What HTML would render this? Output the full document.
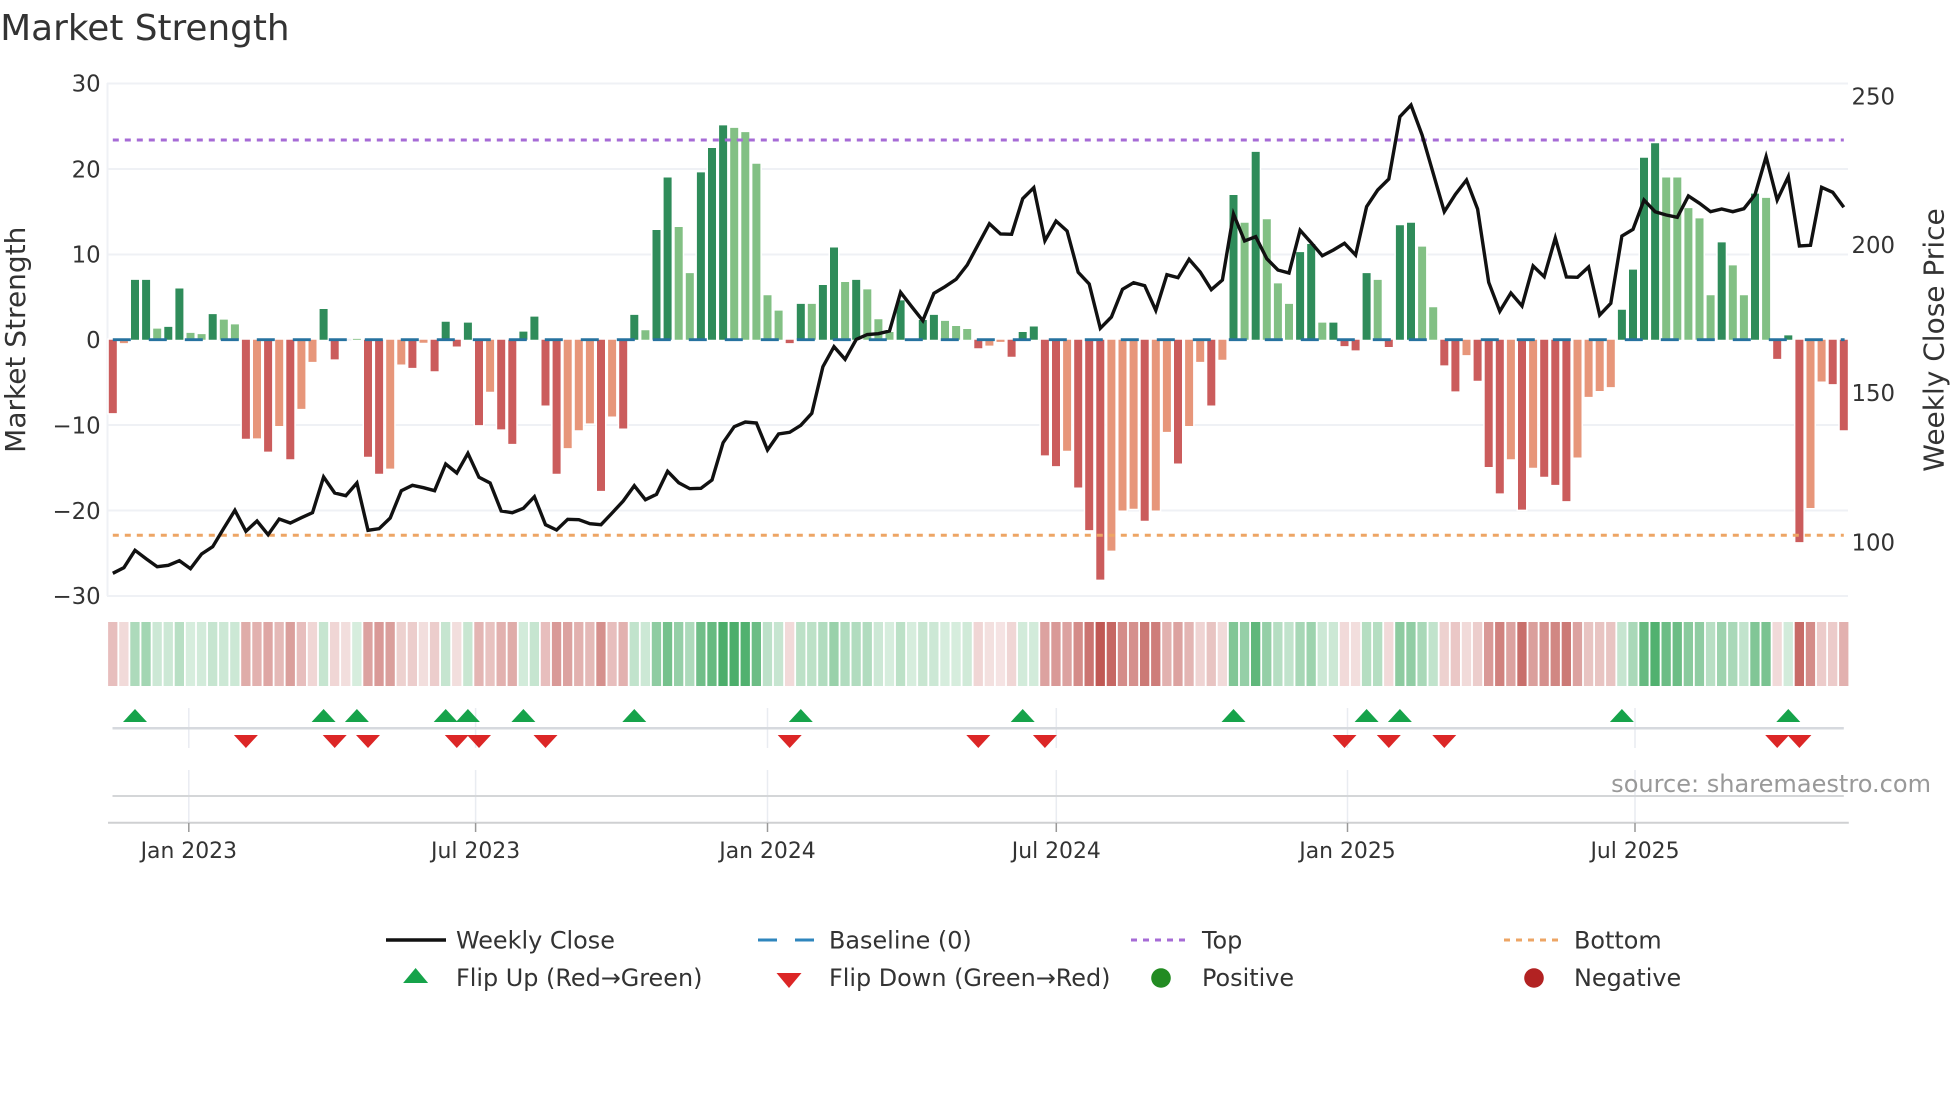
<!DOCTYPE html>
<html><head><meta charset="utf-8"><title>Market Strength</title>
<style>
html,body{margin:0;padding:0;background:#fff;width:1960px;height:1102px;overflow:hidden}
svg{display:block}
text{font-family:"DejaVu Sans","Liberation Sans",sans-serif;fill:#333}
.t{font-size:22.8px}
.x{font-size:21.9px;text-anchor:middle}
.l{font-size:23.9px}
.a{font-size:28px;text-anchor:middle}
.h rect{y:622px;width:9.3px;height:64px}
.h .g{fill:#33a356}
.h .r{fill:#b94641}
.b path{stroke:#fff;stroke-width:3;vector-effect:non-scaling-stroke;paint-order:stroke}
</style></head><body>
<svg width="1960" height="1102" viewBox="0 0 1960 1102" xmlns="http://www.w3.org/2000/svg">
<rect width="1960" height="1102" fill="#fff"/>
<text x="0.3" y="40" style="font-size:35.8px">Market Strength</text>
<g stroke="#eff1f5" stroke-width="2" fill="none">
<path d="M107.5 83V596"/>
<path d="M107 83.5H1848M107 169H1848M107 254.5H1848M107 339.7H1848M107 425H1848M107 510.5H1848M107 596H1848"/>
</g>
<g class="b" transform="translate(0 339.7) scale(1 -8.54)">
<path fill="#2f8c5a" d="M131 0h8V7h-8zM142.1 0h8V7h-8zM164.3 0h8V1.5h-8zM175.4 0h8V6h-8zM208.7 0h8V3h-8zM319.6 0h8V3.6h-8zM441.7 0h8V2.1h-8zM463.9 0h8V2h-8zM519.4 0h8V.95h-8zM530.4 0h8V2.7h-8zM630.3 0h8V2.9h-8zM652.5 0h8V12.85h-8zM663.6 0h8V19h-8zM696.9 0h8V19.6h-8zM708 0h8V22.45h-8zM719.1 0h8V25.1h-8zM796.8 0h8V4.2h-8zM818.9 0h8V6.4h-8zM830 0h8V10.8h-8zM852.2 0h8V7h-8zM896.6 0h8V4.6h-8zM918.8 0h8V2.3h-8zM929.9 0h8V2.9h-8zM1018.7 0h8V.9h-8zM1029.8 0h8V1.55h-8zM1229.5 0h8V16.95h-8zM1251.7 0h8V22h-8zM1296.1 0h8V10.25h-8zM1307.2 0h8V11.2h-8zM1329.4 0h8V2h-8zM1362.6 0h8V7.8h-8zM1395.9 0h8V13.4h-8zM1407 0h8V13.7h-8zM1617.9 0h8V3.5h-8zM1629 0h8V8.2h-8zM1640 0h8V21.3h-8zM1651.1 0h8V23h-8zM1717.7 0h8V11.4h-8zM1751 0h8V17.1h-8zM1784.3 0h8V.5h-8z"/>
<path fill="#82c084" d="M153.2 0h8V1.3h-8zM186.5 0h8V.8h-8zM197.6 0h8V.65h-8zM219.8 0h8V2.35h-8zM230.9 0h8V1.8h-8zM352.9 0h8V.1h-8zM641.4 0h8V1.1h-8zM674.7 0h8V13.2h-8zM685.8 0h8V7.8h-8zM730.2 0h8V24.8h-8zM741.3 0h8V24.3h-8zM752.4 0h8V20.6h-8zM763.5 0h8V5.2h-8zM774.6 0h8V3.4h-8zM807.8 0h8V4.2h-8zM841.1 0h8V6.75h-8zM863.3 0h8V5.9h-8zM874.4 0h8V2.4h-8zM885.5 0h8V.9h-8zM941 0h8V2.2h-8zM952.1 0h8V1.6h-8zM963.2 0h8V1.25h-8zM1240.6 0h8V13.7h-8zM1262.8 0h8V14.1h-8zM1273.9 0h8V6.6h-8zM1285 0h8V4.2h-8zM1318.3 0h8V2h-8zM1373.7 0h8V7h-8zM1418.1 0h8V10.9h-8zM1429.2 0h8V3.8h-8zM1662.2 0h8V19h-8zM1673.3 0h8V19h-8zM1684.4 0h8V15.4h-8zM1695.5 0h8V14.2h-8zM1706.6 0h8V5.2h-8zM1728.8 0h8V8.7h-8zM1739.9 0h8V5.2h-8zM1762.1 0h8V16.6h-8z"/>
<path fill="#cb5c5c" d="M108.8 0h8V-8.6h-8zM241.9 0h8V-11.6h-8zM264.1 0h8V-13.1h-8zM286.3 0h8V-14h-8zM330.7 0h8V-2.3h-8zM364 0h8V-13.7h-8zM375.1 0h8V-15.7h-8zM408.4 0h8V-3.3h-8zM430.6 0h8V-3.7h-8zM452.8 0h8V-.8h-8zM475 0h8V-10h-8zM497.2 0h8V-10.5h-8zM508.3 0h8V-12.2h-8zM541.5 0h8V-7.7h-8zM552.6 0h8V-15.7h-8zM597 0h8V-17.7h-8zM619.2 0h8V-10.4h-8zM785.7 0h8V-.4h-8zM974.3 0h8V-1h-8zM1007.6 0h8V-2h-8zM1040.9 0h8V-13.55h-8zM1052 0h8V-14.8h-8zM1074.2 0h8V-17.3h-8zM1085.2 0h8V-22.3h-8zM1096.3 0h8V-28.1h-8zM1140.7 0h8V-21.2h-8zM1174 0h8V-14.5h-8zM1207.3 0h8V-7.7h-8zM1340.5 0h8V-.75h-8zM1351.6 0h8V-1.25h-8zM1384.8 0h8V-.85h-8zM1440.3 0h8V-3h-8zM1451.4 0h8V-6.05h-8zM1473.6 0h8V-4.8h-8zM1484.7 0h8V-14.9h-8zM1495.8 0h8V-18h-8zM1518 0h8V-19.9h-8zM1540.2 0h8V-16.05h-8zM1551.3 0h8V-17h-8zM1562.4 0h8V-18.9h-8zM1773.2 0h8V-2.25h-8zM1795.4 0h8V-23.7h-8zM1828.7 0h8V-5.2h-8zM1839.8 0h8V-10.6h-8z"/>
<path fill="#e7967a" d="M119.9 0h8V-.4h-8zM253 0h8V-11.55h-8zM275.2 0h8V-10.1h-8zM297.4 0h8V-8.1h-8zM308.5 0h8V-2.6h-8zM386.2 0h8V-15.1h-8zM397.3 0h8V-2.9h-8zM419.5 0h8V-.35h-8zM486.1 0h8V-6.1h-8zM563.7 0h8V-12.7h-8zM574.8 0h8V-10.6h-8zM585.9 0h8V-9.8h-8zM608.1 0h8V-9h-8zM985.4 0h8V-.7h-8zM996.5 0h8V-.25h-8zM1063.1 0h8V-13h-8zM1107.4 0h8V-24.7h-8zM1118.5 0h8V-20h-8zM1129.6 0h8V-19.8h-8zM1151.8 0h8V-20h-8zM1162.9 0h8V-10.8h-8zM1185.1 0h8V-10.1h-8zM1196.2 0h8V-2.6h-8zM1218.4 0h8V-2.35h-8zM1462.5 0h8V-1.8h-8zM1506.9 0h8V-14h-8zM1529.1 0h8V-15h-8zM1573.5 0h8V-13.8h-8zM1584.6 0h8V-6.7h-8zM1595.7 0h8V-6h-8zM1606.8 0h8V-5.55h-8zM1806.5 0h8V-19.7h-8zM1817.6 0h8V-4.9h-8z"/>
</g>
<path d="M112.8 339.7H1844.6" fill="none" stroke="#26729f" stroke-width="2.8" stroke-dasharray="18 18"/>
<path d="M112.8 140H1843.8" fill="none" stroke="#a66bd6" stroke-width="3" stroke-dasharray="6 6"/>
<path d="M112.8 535.3H1843.8" fill="none" stroke="#eda565" stroke-width="3" stroke-dasharray="6 6"/>
<polyline fill="none" stroke="#111" stroke-width="3.4" stroke-linejoin="miter" points="112.8,573.3 123.9,567.7 135,550.3 146.1,558.7 157.2,566.7 168.3,565.3 179.4,560.7 190.5,568.7 201.6,554 212.7,546.7 223.8,528.3 234.9,510.3 245.9,531.3 257,521 268.1,534.7 279.2,519 290.3,523 301.4,517.7 312.5,512.7 323.6,477 334.7,493 345.8,495.7 356.9,483 368,530.3 379.1,528.7 390.2,518 401.3,490.7 412.4,485.3 423.5,487.7 434.6,490.7 445.7,464 456.8,473 467.9,453.3 479,477.3 490.1,483 501.2,511 512.3,512.7 523.4,508.3 534.4,496.7 545.5,524.7 556.6,530 567.7,519.3 578.8,519.7 589.9,523.7 601,524.7 612.1,513 623.2,501 634.3,485.7 645.4,499.7 656.5,494.3 667.6,471.3 678.7,482.7 689.8,488.7 700.9,488.3 712,480 723.1,442.7 734.2,426.7 745.3,422 756.4,423 767.5,450 778.6,434 789.7,432.3 800.8,425.3 811.8,413.3 822.9,366.7 834,346.7 845.1,359.3 856.2,339.5 867.3,334.5 878.4,333.7 889.5,331 900.6,292.3 911.7,306.7 922.8,320.7 933.9,293.3 945,286.7 956.1,279.3 967.2,265 978.3,244.3 989.4,223.7 1000.5,234 1011.6,234.3 1022.7,198.7 1033.8,187.7 1044.9,240.7 1056,221 1067.1,231 1078.2,272.3 1089.2,284 1100.3,328.3 1111.4,317 1122.5,289.3 1133.6,282.7 1144.7,285.7 1155.8,310.3 1166.9,274.7 1178,277.7 1189.1,259.3 1200.2,272 1211.3,289.7 1222.4,280 1233.5,214 1244.6,241 1255.7,236.7 1266.8,258.7 1277.9,270 1289,273 1300.1,230.3 1311.2,242.7 1322.3,255.7 1333.4,250 1344.5,243.3 1355.6,255 1366.6,206.7 1377.7,190 1388.8,179 1399.9,116.7 1411,105 1422.1,135 1433.2,173.3 1444.3,211.7 1455.4,194.3 1466.5,180 1477.6,209 1488.7,282.3 1499.8,311.3 1510.9,293 1522,306 1533.1,266 1544.2,276.7 1555.3,238 1566.4,277 1577.5,277.3 1588.6,267 1599.7,315 1610.8,303.3 1621.9,236 1633,229.3 1644,200 1655.1,211.7 1666.2,215 1677.3,217.3 1688.4,196 1699.5,203.3 1710.6,211.7 1721.7,209 1732.8,211.7 1743.9,208.7 1755,194.7 1766.1,156.7 1777.2,200 1788.3,176.7 1799.4,246 1810.5,245.3 1821.6,187.3 1832.7,192.3 1843.8,207.3"/>
<text class="t" x="100.6" y="91.5" text-anchor="end">30</text>
<text class="t" x="100.6" y="177.5" text-anchor="end">20</text>
<text class="t" x="100.6" y="262.7" text-anchor="end">10</text>
<text class="t" x="100.6" y="348" text-anchor="end">0</text>
<text class="t" x="100.6" y="433.3" text-anchor="end">−10</text>
<text class="t" x="100.6" y="518.8" text-anchor="end">−20</text>
<text class="t" x="100.6" y="604.2" text-anchor="end">−30</text>
<text class="t" x="1851.5" y="104.7">250</text>
<text class="t" x="1851.5" y="252.9">200</text>
<text class="t" x="1851.5" y="401.2">150</text>
<text class="t" x="1851.5" y="550.3">100</text>
<text class="a" transform="translate(25 339.7) rotate(-90)">Market Strength</text>
<text class="a" transform="translate(1943.5 340) rotate(-90)">Weekly Close Price</text>
<g class="h">
<g transform="translate(-.7 0)">
<rect class="r" x="108.8" opacity=".35"/><rect class="r" x="119.9" opacity=".2"/><rect class="g" x="131" opacity=".4"/><rect class="g" x="142.1" opacity=".45"/><rect class="g" x="153.2" opacity=".25"/><rect class="g" x="164.3" opacity=".25"/><rect class="g" x="175.4" opacity=".35"/><rect class="g" x="186.5" opacity=".2"/><rect class="g" x="197.6" opacity=".22"/><rect class="g" x="208.7" opacity=".28"/><rect class="g" x="219.8" opacity=".25"/><rect class="g" x="230.9" opacity=".25"/><rect class="r" x="241.9" opacity=".45"/><rect class="r" x="253" opacity=".42"/><rect class="r" x="264.1" opacity=".48"/><rect class="r" x="275.2" opacity=".38"/><rect class="r" x="286.3" opacity=".52"/><rect class="r" x="297.4" opacity=".35"/><rect class="r" x="308.5" opacity=".22"/><rect class="g" x="319.6" opacity=".28"/><rect class="r" x="330.7" opacity=".22"/><rect class="r" x="341.8" opacity=".18"/><rect class="g" x="352.9" opacity=".2"/><rect class="r" x="364" opacity=".5"/><rect class="r" x="375.1" opacity=".55"/><rect class="r" x="386.2" opacity=".52"/><rect class="r" x="397.3" opacity=".25"/><rect class="r" x="408.4" opacity=".27"/><rect class="r" x="419.5" opacity=".18"/><rect class="r" x="430.6" opacity=".27"/><rect class="g" x="441.7" opacity=".28"/><rect class="r" x="452.8" opacity=".18"/><rect class="g" x="463.9" opacity=".27"/><rect class="r" x="475" opacity=".4"/><rect class="r" x="486.1" opacity=".33"/><rect class="r" x="497.2" opacity=".42"/><rect class="r" x="508.3" opacity=".45"/><rect class="g" x="519.4" opacity=".22"/><rect class="g" x="530.4" opacity=".28"/><rect class="r" x="541.5" opacity=".35"/><rect class="r" x="552.6" opacity=".55"/><rect class="r" x="563.7" opacity=".5"/><rect class="r" x="574.8" opacity=".42"/><rect class="r" x="585.9" opacity=".38"/><rect class="r" x="597" opacity=".6"/><rect class="r" x="608.1" opacity=".35"/><rect class="r" x="619.2" opacity=".42"/><rect class="g" x="630.3" opacity=".3"/><rect class="g" x="641.4" opacity=".25"/><rect class="g" x="652.5" opacity=".55"/><rect class="g" x="663.6" opacity=".68"/><rect class="g" x="674.7" opacity=".52"/><rect class="g" x="685.8" opacity=".4"/><rect class="g" x="696.9" opacity=".7"/><rect class="g" x="708" opacity=".75"/><rect class="g" x="719.1" opacity=".88"/><rect class="g" x="730.2" opacity=".88"/><rect class="g" x="741.3" opacity=".85"/><rect class="g" x="752.4" opacity=".72"/><rect class="g" x="763.5" opacity=".32"/><rect class="g" x="774.6" opacity=".28"/><rect class="r" x="785.7" opacity=".2"/><rect class="g" x="796.8" opacity=".33"/><rect class="g" x="807.8" opacity=".33"/><rect class="g" x="818.9" opacity=".38"/><rect class="g" x="830" opacity=".5"/><rect class="g" x="841.1" opacity=".38"/><rect class="g" x="852.2" opacity=".38"/><rect class="g" x="863.3" opacity=".38"/><rect class="g" x="874.4" opacity=".25"/><rect class="g" x="885.5" opacity=".2"/><rect class="g" x="896.6" opacity=".33"/><rect class="g" x="907.7" opacity=".2"/><rect class="g" x="918.8" opacity=".27"/><rect class="g" x="929.9" opacity=".25"/><rect class="g" x="941" opacity=".2"/><rect class="g" x="952.1" opacity=".2"/><rect class="g" x="963.2" opacity=".23"/><rect class="r" x="974.3" opacity=".22"/><rect class="r" x="985.4" opacity=".17"/><rect class="r" x="996.5" opacity=".15"/><rect class="r" x="1007.6" opacity=".22"/><rect class="g" x="1018.7" opacity=".22"/><rect class="g" x="1029.8" opacity=".22"/><rect class="r" x="1040.9" opacity=".5"/><rect class="r" x="1052" opacity=".55"/><rect class="r" x="1063.1" opacity=".5"/><rect class="r" x="1074.2" opacity=".62"/><rect class="r" x="1085.2" opacity=".75"/><rect class="r" x="1096.3" opacity=".9"/><rect class="r" x="1107.4" opacity=".82"/><rect class="r" x="1118.5" opacity=".62"/><rect class="r" x="1129.6" opacity=".6"/><rect class="r" x="1140.7" opacity=".72"/><rect class="r" x="1151.8" opacity=".7"/><rect class="r" x="1162.9" opacity=".42"/><rect class="r" x="1174" opacity=".5"/><rect class="r" x="1185.1" opacity=".4"/><rect class="r" x="1196.2" opacity=".23"/><rect class="r" x="1207.3" opacity=".32"/><rect class="r" x="1218.4" opacity=".2"/><rect class="g" x="1229.5" opacity=".62"/><rect class="g" x="1240.6" opacity=".52"/><rect class="g" x="1251.7" opacity=".78"/><rect class="g" x="1262.8" opacity=".52"/><rect class="g" x="1273.9" opacity=".36"/><rect class="g" x="1285" opacity=".3"/><rect class="g" x="1296.1" opacity=".43"/><rect class="g" x="1307.2" opacity=".48"/><rect class="g" x="1318.3" opacity=".25"/><rect class="g" x="1329.4" opacity=".25"/><rect class="r" x="1340.5" opacity=".2"/><rect class="r" x="1351.6" opacity=".18"/><rect class="g" x="1362.6" opacity=".36"/><rect class="g" x="1373.7" opacity=".36"/><rect class="r" x="1384.8" opacity=".2"/><rect class="g" x="1395.9" opacity=".56"/><rect class="g" x="1407" opacity=".54"/><rect class="g" x="1418.1" opacity=".42"/><rect class="g" x="1429.2" opacity=".3"/><rect class="r" x="1440.3" opacity=".25"/><rect class="r" x="1451.4" opacity=".3"/><rect class="r" x="1462.5" opacity=".2"/><rect class="r" x="1473.6" opacity=".27"/><rect class="r" x="1484.7" opacity=".55"/><rect class="r" x="1495.8" opacity=".68"/><rect class="r" x="1506.9" opacity=".5"/><rect class="r" x="1518" opacity=".78"/><rect class="r" x="1529.1" opacity=".52"/><rect class="r" x="1540.2" opacity=".6"/><rect class="r" x="1551.3" opacity=".65"/><rect class="r" x="1562.4" opacity=".72"/><rect class="r" x="1573.5" opacity=".5"/><rect class="r" x="1584.6" opacity=".32"/><rect class="r" x="1595.7" opacity=".32"/><rect class="r" x="1606.8" opacity=".32"/><rect class="g" x="1617.9" opacity=".28"/><rect class="g" x="1629" opacity=".42"/><rect class="g" x="1640" opacity=".75"/><rect class="g" x="1651.1" opacity=".85"/><rect class="g" x="1662.2" opacity=".72"/><rect class="g" x="1673.3" opacity=".72"/><rect class="g" x="1684.4" opacity=".58"/><rect class="g" x="1695.5" opacity=".55"/><rect class="g" x="1706.6" opacity=".35"/><rect class="g" x="1717.7" opacity=".48"/><rect class="g" x="1728.8" opacity=".42"/><rect class="g" x="1739.9" opacity=".3"/><rect class="g" x="1751" opacity=".62"/><rect class="g" x="1762.1" opacity=".65"/><rect class="r" x="1773.2" opacity=".2"/><rect class="g" x="1784.3" opacity=".22"/><rect class="r" x="1795.4" opacity=".8"/><rect class="r" x="1806.5" opacity=".62"/><rect class="r" x="1817.6" opacity=".28"/><rect class="r" x="1828.7" opacity=".28"/><rect class="r" x="1839.8" opacity=".42"/>
</g></g>
<path d="M188.8 708V748M475.6 708V748M767.5 708V748M1056.3 708V748M1347.5 708V748M1635 708V748M188.8 770V823M475.6 770V823M767.5 770V823M1056.3 770V823M1347.5 770V823M1635 770V823" fill="none" stroke="#e9ecf1" stroke-width="1.5"/>
<path d="M112.5 728.3H1843.8" fill="none" stroke="#d6d9de" stroke-width="2.5"/>
<path d="M112.5 796H1843.8" fill="none" stroke="#d4d6d8" stroke-width="2"/>
<path d="M108 822.7H1848.8" fill="none" stroke="#cfd0d2" stroke-width="2"/>
<path d="M188.8 823V832M475.6 823V832M767.5 823V832M1056.3 823V832M1347.5 823V832M1635 823V832" fill="none" stroke="#999" stroke-width="1.5"/>
<path fill="#16a34a" d="M123 722l12-13 12 13zM311.6 722l12-13 12 13zM344.9 722l12-13 12 13zM433.7 722l12-13 12 13zM455.9 722l12-13 12 13zM511.4 722l12-13 12 13zM622.3 722l12-13 12 13zM788.8 722l12-13 12 13zM1010.7 722l12-13 12 13zM1221.5 722l12-13 12 13zM1354.6 722l12-13 12 13zM1387.9 722l12-13 12 13zM1609.9 722l12-13 12 13zM1776.3 722l12-13 12 13z"/>
<path fill="#dc2626" d="M233.9 735h24l-12 13zM322.7 735h24l-12 13zM356 735h24l-12 13zM444.8 735h24l-12 13zM467 735h24l-12 13zM533.5 735h24l-12 13zM777.7 735h24l-12 13zM966.3 735h24l-12 13zM1032.9 735h24l-12 13zM1332.5 735h24l-12 13zM1376.8 735h24l-12 13zM1432.3 735h24l-12 13zM1765.2 735h24l-12 13zM1787.4 735h24l-12 13z"/>
<text class="x" x="188.8" y="858">Jan 2023</text>
<text class="x" x="475.6" y="858">Jul 2023</text>
<text class="x" x="767.5" y="858">Jan 2024</text>
<text class="x" x="1056.3" y="858">Jul 2024</text>
<text class="x" x="1347.5" y="858">Jan 2025</text>
<text class="x" x="1635" y="858">Jul 2025</text>
<text x="1931" y="792" text-anchor="end" style="font-size:24.05px;fill:#999">source: sharemaestro.com</text>
<path d="M386 940H446" stroke="#111" stroke-width="3.4" fill="none"/>
<path d="M758 940H814" stroke="#2f86bd" stroke-width="3" fill="none" stroke-dasharray="19 18"/>
<path d="M1131 940H1187" stroke="#a66bd6" stroke-width="3" fill="none" stroke-dasharray="6 6"/>
<path d="M1504 940H1560" stroke="#eda565" stroke-width="3" fill="none" stroke-dasharray="6 6"/>
<path d="M403.1 983l12.5-15 12.5 15z" fill="#16a34a"/>
<path d="M776.5 973h25l-12.5 15z" fill="#dc2626"/>
<circle cx="1161" cy="978" r="9.8" fill="#228b22"/>
<circle cx="1534" cy="978" r="9.8" fill="#b22222"/>
<text class="l" x="456" y="948.5">Weekly Close</text>
<text class="l" x="829" y="948.5">Baseline (0)</text>
<text class="l" x="1202" y="948.5">Top</text>
<text class="l" x="1574" y="948.5">Bottom</text>
<text class="l" x="456" y="986">Flip Up (Red→Green)</text>
<text class="l" x="829" y="986">Flip Down (Green→Red)</text>
<text class="l" x="1202" y="986">Positive</text>
<text class="l" x="1574" y="986">Negative</text>
</svg>
</body></html>
